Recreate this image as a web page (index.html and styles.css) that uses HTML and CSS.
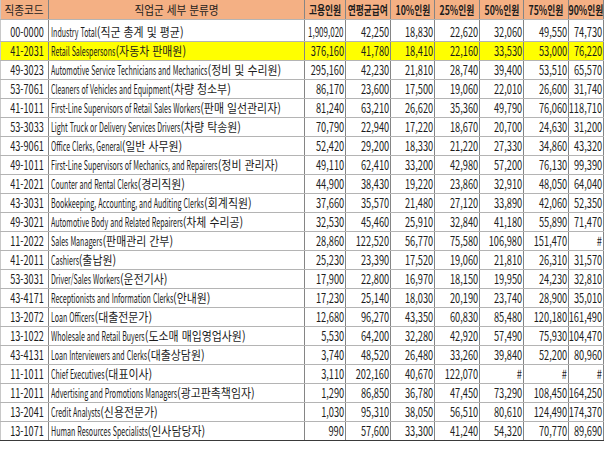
FILE: index.html
```html
<!DOCTYPE html>
<html lang="ko">
<head>
<meta charset="utf-8">
<title>직업군 세부 분류</title>
<link rel="stylesheet" href="styles.css">
</head>
<body>
<div class="sheet" role="table">
  <div class="row head" role="row">
    <div class="cell c"><span class="hs">직종코드</span></div>
    <div class="cell c"><span class="hs">직업군 세부 분류명</span></div>
    <div class="cell c"><span class="hn">고용인원</span></div>
    <div class="cell c"><span class="hn">연평균급여</span></div>
    <div class="cell c"><span class="hn">10%인원</span></div>
    <div class="cell c"><span class="hn">25%인원</span></div>
    <div class="cell c"><span class="hn">50%인원</span></div>
    <div class="cell c"><span class="hn">75%인원</span></div>
    <div class="cell c"><span class="hn">90%인원</span></div>
  </div>
  <div class="row first"><div class="cell code"><span class="cs">00-0000</span></div><div class="cell name"><span class="nm">Industry Total<span class="ko">(직군 총계 및 평균)</span></span></div><div class="cell n"><span class="tight">1,909,020</span></div><div class="cell n"><span>42,250</span></div><div class="cell n"><span>18,830</span></div><div class="cell n"><span>22,620</span></div><div class="cell n"><span>32,060</span></div><div class="cell n"><span>49,550</span></div><div class="cell n"><span>74,730</span></div></div>
  <div class="row hl"><div class="cell code"><span class="cs">41-2031</span></div><div class="cell name"><span class="nm">Retail Salespersons<span class="ko">(자동차 판매원)</span></span></div><div class="cell n"><span>376,160</span></div><div class="cell n"><span>41,780</span></div><div class="cell n"><span>18,410</span></div><div class="cell n"><span>22,160</span></div><div class="cell n"><span>33,530</span></div><div class="cell n"><span>53,000</span></div><div class="cell n"><span>76,220</span></div></div>
  <div class="row"><div class="cell code"><span class="cs">49-3023</span></div><div class="cell name"><span class="nm">Automotive Service Technicians and Mechanics<span class="ko">(정비 및 수리원)</span></span></div><div class="cell n"><span>295,160</span></div><div class="cell n"><span>42,230</span></div><div class="cell n"><span>21,810</span></div><div class="cell n"><span>28,740</span></div><div class="cell n"><span>39,400</span></div><div class="cell n"><span>53,510</span></div><div class="cell n"><span>65,570</span></div></div>
  <div class="row"><div class="cell code"><span class="cs">53-7061</span></div><div class="cell name"><span class="nm">Cleaners of Vehicles and Equipment<span class="ko">(차량 청소부)</span></span></div><div class="cell n"><span>86,170</span></div><div class="cell n"><span>23,600</span></div><div class="cell n"><span>17,500</span></div><div class="cell n"><span>19,060</span></div><div class="cell n"><span>22,010</span></div><div class="cell n"><span>26,600</span></div><div class="cell n"><span>31,740</span></div></div>
  <div class="row"><div class="cell code"><span class="cs">41-1011</span></div><div class="cell name"><span class="nm">First-Line Supervisors of Retail Sales Workers<span class="ko">(판매 일선관리자)</span></span></div><div class="cell n"><span>81,240</span></div><div class="cell n"><span>63,210</span></div><div class="cell n"><span>26,620</span></div><div class="cell n"><span>35,360</span></div><div class="cell n"><span>49,790</span></div><div class="cell n"><span>76,060</span></div><div class="cell n"><span>118,710</span></div></div>
  <div class="row"><div class="cell code"><span class="cs">53-3033</span></div><div class="cell name"><span class="nm">Light Truck or Delivery Services Drivers<span class="ko">(차량 탁송원)</span></span></div><div class="cell n"><span>70,790</span></div><div class="cell n"><span>22,940</span></div><div class="cell n"><span>17,220</span></div><div class="cell n"><span>18,670</span></div><div class="cell n"><span>20,700</span></div><div class="cell n"><span>24,630</span></div><div class="cell n"><span>31,200</span></div></div>
  <div class="row"><div class="cell code"><span class="cs">43-9061</span></div><div class="cell name"><span class="nm">Office Clerks, General<span class="ko">(일반 사무원)</span></span></div><div class="cell n"><span>52,420</span></div><div class="cell n"><span>29,200</span></div><div class="cell n"><span>18,330</span></div><div class="cell n"><span>21,220</span></div><div class="cell n"><span>27,330</span></div><div class="cell n"><span>34,860</span></div><div class="cell n"><span>43,320</span></div></div>
  <div class="row"><div class="cell code"><span class="cs">49-1011</span></div><div class="cell name"><span class="nm">First-Line Supervisors of Mechanics, and Repairers<span class="ko">(정비 관리자)</span></span></div><div class="cell n"><span>49,110</span></div><div class="cell n"><span>62,410</span></div><div class="cell n"><span>33,200</span></div><div class="cell n"><span>42,980</span></div><div class="cell n"><span>57,200</span></div><div class="cell n"><span>76,130</span></div><div class="cell n"><span>99,390</span></div></div>
  <div class="row"><div class="cell code"><span class="cs">41-2021</span></div><div class="cell name"><span class="nm">Counter and Rental Clerks<span class="ko">(경리직원)</span></span></div><div class="cell n"><span>44,900</span></div><div class="cell n"><span>38,430</span></div><div class="cell n"><span>19,220</span></div><div class="cell n"><span>23,860</span></div><div class="cell n"><span>32,910</span></div><div class="cell n"><span>48,050</span></div><div class="cell n"><span>64,040</span></div></div>
  <div class="row"><div class="cell code"><span class="cs">43-3031</span></div><div class="cell name"><span class="nm">Bookkeeping, Accounting, and Auditing Clerks<span class="ko">(회계직원)</span></span></div><div class="cell n"><span>37,660</span></div><div class="cell n"><span>35,570</span></div><div class="cell n"><span>21,480</span></div><div class="cell n"><span>27,120</span></div><div class="cell n"><span>33,890</span></div><div class="cell n"><span>42,060</span></div><div class="cell n"><span>52,350</span></div></div>
  <div class="row"><div class="cell code"><span class="cs">49-3021</span></div><div class="cell name"><span class="nm">Automotive Body and Related Repairers<span class="ko">(차체 수리공)</span></span></div><div class="cell n"><span>32,530</span></div><div class="cell n"><span>45,460</span></div><div class="cell n"><span>25,910</span></div><div class="cell n"><span>32,840</span></div><div class="cell n"><span>41,180</span></div><div class="cell n"><span>55,890</span></div><div class="cell n"><span>71,470</span></div></div>
  <div class="row"><div class="cell code"><span class="cs">11-2022</span></div><div class="cell name"><span class="nm">Sales Managers<span class="ko">(판매관리 간부)</span></span></div><div class="cell n"><span>28,860</span></div><div class="cell n"><span>122,520</span></div><div class="cell n"><span>56,770</span></div><div class="cell n"><span>75,580</span></div><div class="cell n"><span>106,980</span></div><div class="cell n"><span>151,470</span></div><div class="cell n"><span>#</span></div></div>
  <div class="row"><div class="cell code"><span class="cs">41-2011</span></div><div class="cell name"><span class="nm">Cashiers<span class="ko">(출납원)</span></span></div><div class="cell n"><span>25,230</span></div><div class="cell n"><span>23,390</span></div><div class="cell n"><span>17,520</span></div><div class="cell n"><span>19,060</span></div><div class="cell n"><span>21,810</span></div><div class="cell n"><span>26,310</span></div><div class="cell n"><span>31,570</span></div></div>
  <div class="row"><div class="cell code"><span class="cs">53-3031</span></div><div class="cell name"><span class="nm">Driver/Sales Workers<span class="ko">(운전기사)</span></span></div><div class="cell n"><span>17,900</span></div><div class="cell n"><span>22,800</span></div><div class="cell n"><span>16,970</span></div><div class="cell n"><span>18,150</span></div><div class="cell n"><span>19,950</span></div><div class="cell n"><span>24,230</span></div><div class="cell n"><span>32,810</span></div></div>
  <div class="row"><div class="cell code"><span class="cs">43-4171</span></div><div class="cell name"><span class="nm">Receptionists and Information Clerks<span class="ko">(안내원)</span></span></div><div class="cell n"><span>17,230</span></div><div class="cell n"><span>25,140</span></div><div class="cell n"><span>18,030</span></div><div class="cell n"><span>20,190</span></div><div class="cell n"><span>23,740</span></div><div class="cell n"><span>28,900</span></div><div class="cell n"><span>35,010</span></div></div>
  <div class="row"><div class="cell code"><span class="cs">13-2072</span></div><div class="cell name"><span class="nm">Loan Officers<span class="ko">(대출전문가)</span></span></div><div class="cell n"><span>12,680</span></div><div class="cell n"><span>96,270</span></div><div class="cell n"><span>43,350</span></div><div class="cell n"><span>60,830</span></div><div class="cell n"><span>85,480</span></div><div class="cell n"><span>120,180</span></div><div class="cell n"><span>161,490</span></div></div>
  <div class="row"><div class="cell code"><span class="cs">13-1022</span></div><div class="cell name"><span class="nm">Wholesale and Retail Buyers<span class="ko">(도소매 매입영업사원)</span></span></div><div class="cell n"><span>5,530</span></div><div class="cell n"><span>64,200</span></div><div class="cell n"><span>32,280</span></div><div class="cell n"><span>42,920</span></div><div class="cell n"><span>57,490</span></div><div class="cell n"><span>75,930</span></div><div class="cell n"><span>104,470</span></div></div>
  <div class="row"><div class="cell code"><span class="cs">43-4131</span></div><div class="cell name"><span class="nm">Loan Interviewers and Clerks<span class="ko">(대출상담원)</span></span></div><div class="cell n"><span>3,740</span></div><div class="cell n"><span>48,520</span></div><div class="cell n"><span>26,480</span></div><div class="cell n"><span>33,260</span></div><div class="cell n"><span>39,840</span></div><div class="cell n"><span>52,200</span></div><div class="cell n"><span>80,960</span></div></div>
  <div class="row"><div class="cell code"><span class="cs">11-1011</span></div><div class="cell name"><span class="nm">Chief Executives<span class="ko">(대표이사)</span></span></div><div class="cell n"><span>3,110</span></div><div class="cell n"><span>202,160</span></div><div class="cell n"><span>40,670</span></div><div class="cell n"><span>122,070</span></div><div class="cell n"><span>#</span></div><div class="cell n"><span>#</span></div><div class="cell n"><span>#</span></div></div>
  <div class="row"><div class="cell code"><span class="cs">11-2011</span></div><div class="cell name"><span class="nm">Advertising and Promotions Managers<span class="ko">(광고판촉책임자)</span></span></div><div class="cell n"><span>1,290</span></div><div class="cell n"><span>86,850</span></div><div class="cell n"><span>36,780</span></div><div class="cell n"><span>47,450</span></div><div class="cell n"><span>73,290</span></div><div class="cell n"><span>108,450</span></div><div class="cell n"><span>164,250</span></div></div>
  <div class="row"><div class="cell code"><span class="cs">13-2041</span></div><div class="cell name"><span class="nm">Credit Analysts<span class="ko">(신용전문가)</span></span></div><div class="cell n"><span>1,030</span></div><div class="cell n"><span>95,310</span></div><div class="cell n"><span>38,050</span></div><div class="cell n"><span>56,510</span></div><div class="cell n"><span>80,610</span></div><div class="cell n"><span>124,490</span></div><div class="cell n"><span>174,370</span></div></div>
  <div class="row last"><div class="cell code"><span class="cs">13-1071</span></div><div class="cell name"><span class="nm">Human Resources Specialists<span class="ko">(인사담당자)</span></span></div><div class="cell n"><span>990</span></div><div class="cell n"><span>57,600</span></div><div class="cell n"><span>33,300</span></div><div class="cell n"><span>41,240</span></div><div class="cell n"><span>54,320</span></div><div class="cell n"><span>70,770</span></div><div class="cell n"><span>89,690</span></div></div>
</div>
</body>
</html>
```
FILE: styles.css
```css
html, body {
  margin: 0;
  padding: 0;
  background: #ffffff;
}

.sheet {
  width: 604px;
  font-family: "Noto Sans CJK KR", "Noto Sans", sans-serif;
  font-size: 12.5px;
  color: #1c1c1c;
  line-height: 14px;
}

.row {
  display: grid;
  grid-template-columns: 49px 256px 41px 45px 44px 45px 44px 45px 35px;
  height: 19px;
  box-sizing: border-box;
  border-bottom: 1px solid #b4b4b4;
}

.row.head {
  height: 20px;
  background: #f4b084;
}

.row.first {
  height: 22px;
}

.row.first .cell {
  padding-top: 2px;
}

.row.hl {
  background: #ffff00;
}

.row.last {
  border-bottom-color: #3a3a3a;
}

.cell {
  box-sizing: border-box;
  border-right: 1px solid #858585;
  display: flex;
  align-items: center;
  white-space: nowrap;
  min-width: 0;
}

.cell:first-child {
  border-left: 1px solid #c8c8c8;
}

.cell.c {
  justify-content: center;
}

.hs {
  display: inline-block;
  transform: scaleX(0.85);
}

.hn {
  display: inline-block;
  font-weight: 700;
  transform: scaleX(0.7);
}

.code {
  justify-content: center;
  padding-left: 5px;
}

.cs {
  display: inline-block;
  transform: scaleX(0.73);
}

.name {
  justify-content: flex-start;
  padding-left: 2px;
}

.nm {
  display: inline-block;
  transform: scaleX(0.565);
  transform-origin: left center;
}

.ko {
  display: inline-block;
  transform: scaleX(1.545);
  transform-origin: left center;
}

.n {
  justify-content: flex-end;
  padding-right: 1px;
}

.n span {
  display: inline-block;
  transform: scaleX(0.74);
  transform-origin: right center;
}

.n span.tight {
  transform: scaleX(0.64);
}
```
